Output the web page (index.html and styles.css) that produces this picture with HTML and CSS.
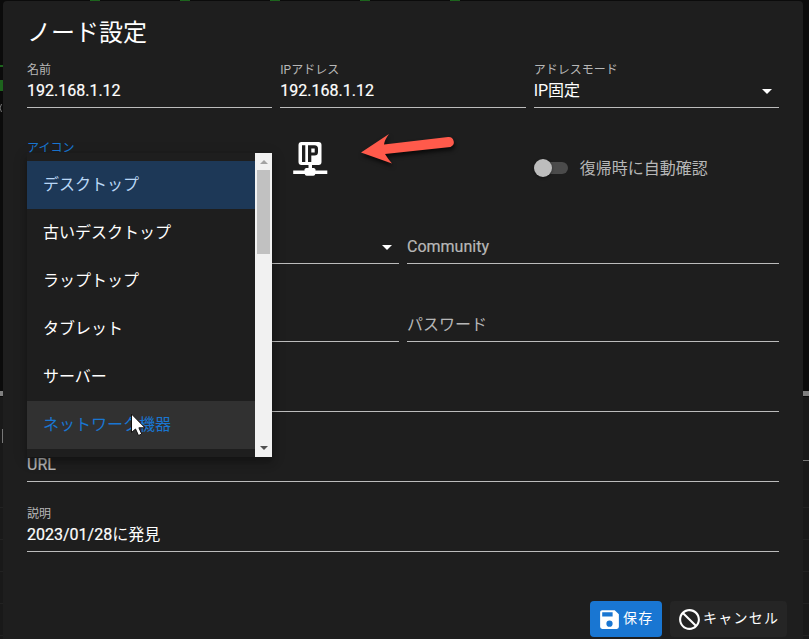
FILE: index.html
```html
<!DOCTYPE html>
<html lang="ja">
<head>
<meta charset="utf-8">
<title>ノード設定</title>
<link rel="stylesheet" href="styles.css">
</head>
<body>
<svg class="backdrop" width="809" height="639" viewBox="0 0 809 639" aria-hidden="true">
  <path fill="#0b0b0b" d="M0 0h809v392H0z"/>
  <path fill="#191919" d="M0 397h809v242H0z"/>
  <path fill="#808080" d="M0 391h809v5H0z"/>
  <path fill="#1d641d" d="M90 0h10v1H90zM180 0h10v1h-10zM270 0h10v1h-10zM360 0h10v1h-10zM450 0h10v1h-10zM0 65h3v2H0zM0 80h3v11H0z"/>
  <path fill="none" stroke="#777" d="M1.500 104q-3 4 0 8M2.500 429v14M803 460.500h6"/>
  <path fill="none" stroke="#222" d="M0 507.500h809M0 539.500h809M0 571.500h809M0 603.500h809M0 635.500h809"/>
</svg>
<main class="dialog">
  <h1 class="title">ノード設定</h1>
  <form class="form">
    <div class="row thirds first">
      <div class="field"><label class="label">名前</label><span class="value latin">192.168.1.12</span></div>
      <div class="field"><label class="label">IPアドレス</label><span class="value latin">192.168.1.12</span></div>
      <div class="field"><label class="label">アドレスモード</label><span class="value">IP固定</span><i class="caret"></i></div>
    </div>
    <div class="row thirds icon-row">
      <div class="select">
        <label class="label active">アイコン</label>
        <div class="menu">
          <ul class="options">
            <li class="option selected">デスクトップ</li>
            <li class="option">古いデスクトップ</li>
            <li class="option">ラップトップ</li>
            <li class="option">タブレット</li>
            <li class="option">サーバー</li>
            <li class="option hover">ネットワーク機器</li>
          </ul>
          <div class="scrollbar"><i class="up"></i><i class="thumb"></i><i class="down"></i></div>
        </div>
      </div>
      <div class="preview">
        <svg width="36" height="36" viewBox="0 0 36 36">
          <path fill="#fff" fill-rule="evenodd" d="M9.500 2h17a3 3 0 0 1 3 3v17a3 3 0 0 1-3 3h-6.500v3h1.500a2 2 0 0 1 2 2.500H35.300V34H23.300a2 2 0 0 1-2 1.800h-6.600a2 2 0 0 1-2-1.800H1.200v-3.500h11.300a2 2 0 0 1 2-2.500h2V25H9.500a3 3 0 0 1-3-3V5a3 3 0 0 1 3-3zM10 5.300V22h3.300V5.300zM16 5.300V22h3.300v-6.400h3.200a3.500 3.500 0 0 0 3.500-3.500V8.800a3.500 3.500 0 0 0-3.500-3.500zM19.300 8.500h3.400v4h-3.400z"/>
        </svg>
      </div>
      <div class="switch"><span class="track"><i class="knob"></i></span><span class="switch-label">復帰時に自動確認</span></div>
    </div>
    <div class="row halves tall">
      <div class="field"><i class="caret"></i></div>
      <div class="field"><span class="value muted latin">Community</span></div>
    </div>
    <div class="row halves tall">
      <div class="field"></div>
      <div class="field"><span class="value muted">パスワード</span></div>
    </div>
    <div class="row"><div class="field"></div></div>
    <div class="row"><div class="field"><span class="value muted latin">URL</span></div></div>
    <div class="row"><div class="field"><label class="label">説明</label><span class="value"><span class="latin">2023/01/28</span>に発見</span></div></div>
  </form>
  <footer class="actions">
    <button class="btn primary"><svg width="25" height="25" viewBox="0 0 24 24"><path fill="currentColor" d="M15,9H5V5H15M12,19A3,3 0 0,1 9,16A3,3 0 0,1 12,13A3,3 0 0,1 15,16A3,3 0 0,1 12,19M17,3H5C3.890,3 3,3.900 3,5V19A2,2 0 0,0 5,21H19A2,2 0 0,0 21,19V7L17,3Z"/></svg><span class="btn-text">保存</span></button>
    <button class="btn"><svg width="25" height="25" viewBox="0 0 24 24"><path fill="currentColor" d="M12 2C17.500 2 22 6.500 22 12S17.500 22 12 22 2 17.500 2 12 6.500 2 12 2M12 4C10.100 4 8.400 4.600 7.100 5.700L18.300 16.900C19.300 15.500 20 13.800 20 12C20 7.600 16.400 4 12 4M16.900 18.300L5.700 7.100C4.600 8.400 4 10.100 4 12C4 16.400 7.600 20 12 20C13.900 20 15.600 19.400 16.900 18.300Z"/></svg><span class="btn-text">キャンセル</span></button>
  </footer>
</main>
<svg class="arrow" width="110" height="50" viewBox="350 125 110 50">
  <path fill="#ff5a4b" d="M361 152.500L389 134Q384.500 140 384 144.500L448 137A5.200 5.200 0 0 1 450.500 147L385 154Q388 159 392 163.500Z"/>
</svg>
<svg class="cursor" width="18" height="26" viewBox="0 0 18 26">
  <path fill="#fff" stroke="#111" d="M1.500 1v18.500l4-3.500 3 6.500 3.200-1.500-2.800-6.200H15z"/>
</svg>
</body>
</html>
```
FILE: styles.css
```css
* { box-sizing: border-box; }
body {
  margin: 0;
  height: 639px;
  overflow: hidden;
  background: #0b0b0b;
  color: #fff;
  font: 16px/24px Roboto, "Noto Sans CJK JP", sans-serif;
}
.backdrop { position: absolute; left: 0; top: 0; }
.dialog {
  position: relative;
  width: 800px;
  height: 650px;
  margin: 1px 0 0 3px;
  padding: 0 24px;
  border-radius: 4px;
  background: #1e1e1e;
}
.title {
  margin: 0;
  height: 61px;
  padding-top: 16px;
  font-size: 24px;
  line-height: 32px;
  font-weight: 400;
}
.form { display: flex; flex-direction: column; }
.row { display: grid; gap: 8px; height: 70px; align-items: end; }
.thirds { grid-template-columns: repeat(3, 1fr); }
.halves { grid-template-columns: 1fr 1fr; }
.first { height: 46px; }
.tall { height: 78px; }
.field {
  position: relative;
  display: flex;
  flex-direction: column;
  justify-content: flex-end;
  height: 46px;
  padding-bottom: 3px;
  border-bottom: 1px solid #bcbcbc;
}
.label { font-size: 12px; line-height: 14px; color: #b7b7b7; }
.field .label { margin-bottom: 2px; }
.value { height: 25px; font-weight: 400; }
.latin { -webkit-text-stroke: .2px currentColor; }
.muted { color: #b7b7b7; }
.active { color: #1976d2; }
.caret {
  position: absolute;
  right: 7px;
  bottom: 13px;
  border: 5px solid transparent;
  border-top-color: #fff;
  border-bottom: 0;
}
.icon-row { height: 78px; align-items: start; }
.select { position: relative; padding-top: 33px; height: 78px; }
.select .label { display: block; }
.menu {
  position: absolute;
  z-index: 2;
  top: 45px;
  left: 0;
  width: 245px;
  height: 304px;
  display: flex;
  background: #1e1e1e;
  box-shadow: 0 5px 6px rgba(0, 0, 0, .25), 0 3px 14px rgba(0, 0, 0, .15);
}
.options { flex: 1; margin: 0; padding: 8px 0; list-style: none; }
.option { height: 48px; padding: 0 16px; line-height: 47px; }
.selected { background: #1d3857; color: #b9d7f5; }
.hover { background: #313131; color: #1976d2; }
.scrollbar {
  width: 17px;
  display: flex;
  flex-direction: column;
  align-items: center;
  padding: 7px 0;
  background: #f1f1f1;
}
.up { border: 4px solid transparent; border-top: 0; border-bottom-color: #a3a3a3; }
.thumb { width: 13px; height: 84px; margin-top: 6px; background: #c1c1c1; }
.down { margin-top: auto; border: 4px solid transparent; border-bottom: 0; border-top-color: #505050; }
.preview { padding: 32px 0 0 12px; }
.preview svg { display: block; }
.switch { display: flex; align-items: center; gap: 12px; padding-top: 48px; color: #b7b7b7; }
.switch-label { padding-top: 1px; margin-bottom: -1px; }
.track {
  position: relative;
  width: 31px;
  height: 12px;
  margin-left: 3px;
  border-radius: 6px;
  background: #4b4b4b;
}
.knob {
  position: absolute;
  left: -3px;
  top: -3px;
  width: 18px;
  height: 18px;
  border-radius: 50%;
  background: #bdbdbd;
  box-shadow: 0 1px 3px rgba(0, 0, 0, .4);
}
.actions { display: flex; justify-content: flex-end; gap: 8px; margin: 49px -8px 0 0; }
.btn {
  display: flex;
  align-items: center;
  gap: 1px;
  width: 117px;
  height: 36px;
  border: 0;
  border-radius: 4px;
  padding: 0 6px 0 7px;
  background: #252525;
  color: #fff;
  font: 400 14px/20px Roboto, "Noto Sans CJK JP", sans-serif;
  letter-spacing: 1.25px;
  white-space: nowrap;
}
.btn-text { padding-bottom: 2px; }
.primary { width: 72px; background: #1976d2; }
.arrow {
  position: absolute;
  left: 350px;
  top: 125px;
  filter: drop-shadow(1px 3px 2px rgba(0, 0, 0, .7));
}
.cursor { position: absolute; left: 130px; top: 413px; z-index: 3; }
```
